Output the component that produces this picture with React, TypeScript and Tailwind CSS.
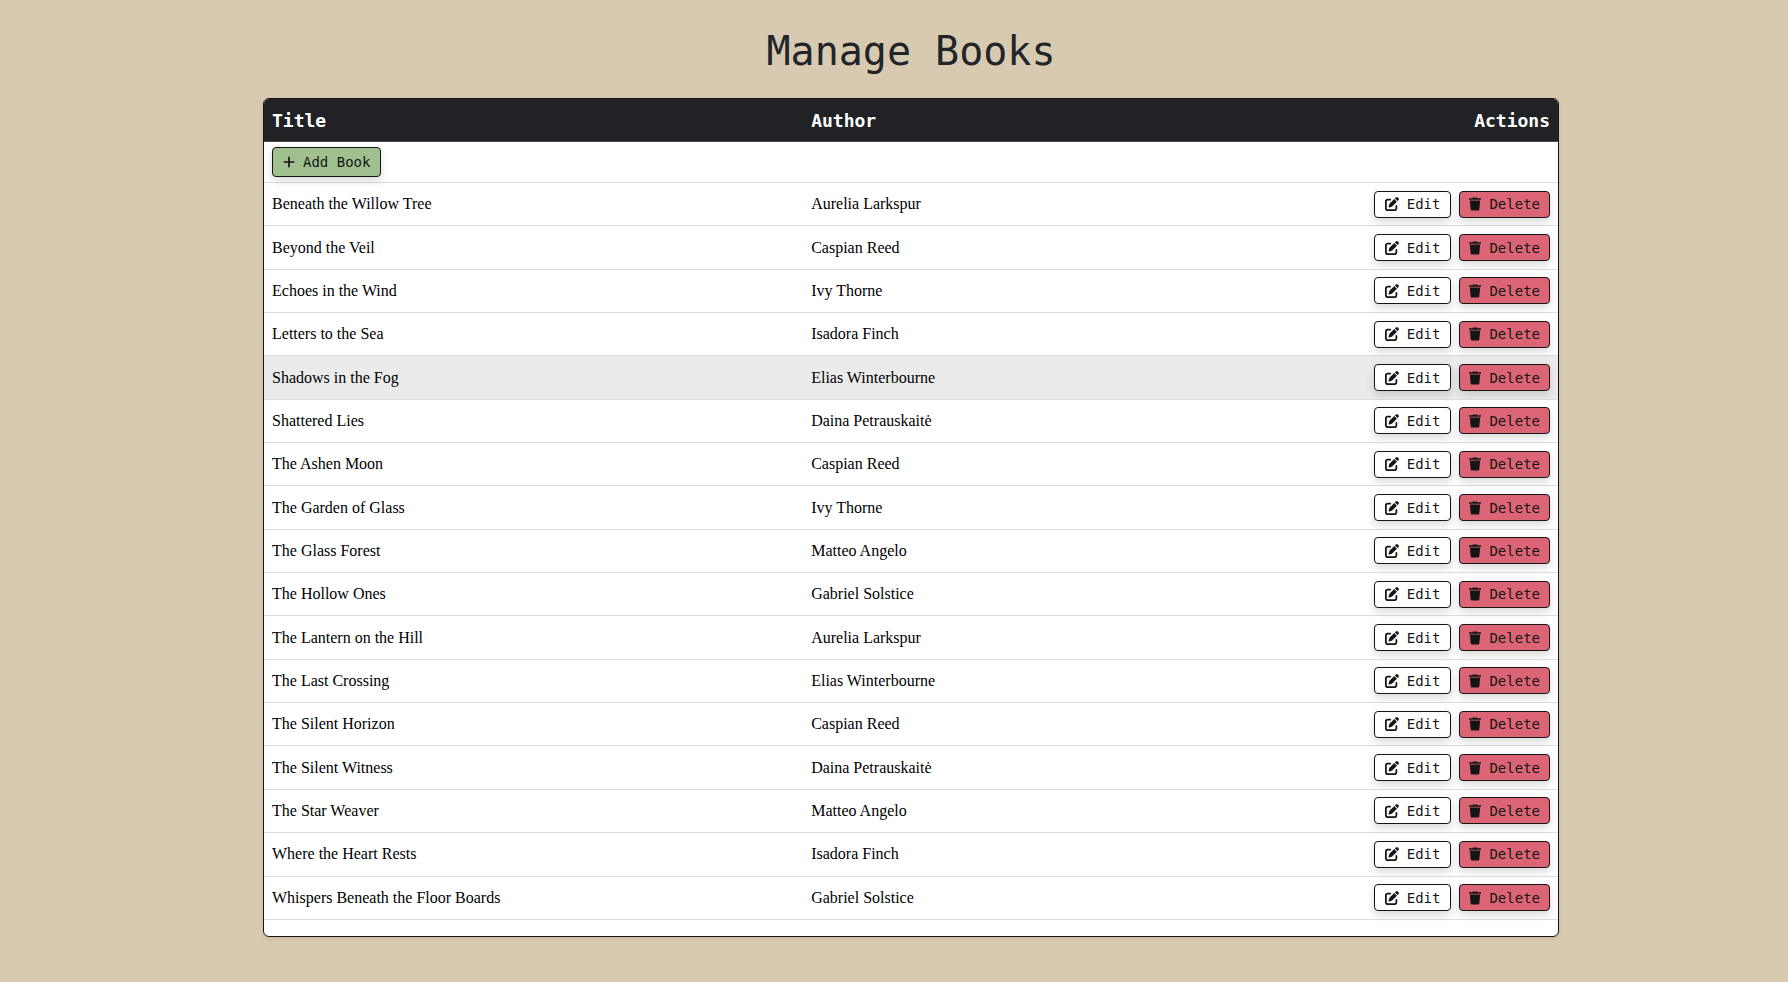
import type { ButtonHTMLAttributes } from "react";
import { FaPenToSquare, FaPlus } from "react-icons/fa6";

type Book = { title: string; author: string };

const books: Book[] = [
  { title: "Beneath the Willow Tree", author: "Aurelia Larkspur" },
  { title: "Beyond the Veil", author: "Caspian Reed" },
  { title: "Echoes in the Wind", author: "Ivy Thorne" },
  { title: "Letters to the Sea", author: "Isadora Finch" },
  { title: "Shadows in the Fog", author: "Elias Winterbourne" },
  { title: "Shattered Lies", author: "Daina Petrauskaitė" },
  { title: "The Ashen Moon", author: "Caspian Reed" },
  { title: "The Garden of Glass", author: "Ivy Thorne" },
  { title: "The Glass Forest", author: "Matteo Angelo" },
  { title: "The Hollow Ones", author: "Gabriel Solstice" },
  { title: "The Lantern on the Hill", author: "Aurelia Larkspur" },
  { title: "The Last Crossing", author: "Elias Winterbourne" },
  { title: "The Silent Horizon", author: "Caspian Reed" },
  { title: "The Silent Witness", author: "Daina Petrauskaitė" },
  { title: "The Star Weaver", author: "Matteo Angelo" },
  { title: "Where the Heart Rests", author: "Isadora Finch" },
  { title: "Whispers Beneath the Floor Boards", author: "Gabriel Solstice" },
];

const highlighted = "Shadows in the Fog";

const tones = {
  add: "h-[30px] px-[10px] bg-[#a0c090]",
  edit: "h-[27px] px-[10px] bg-white",
  remove: "h-[27px] px-[9px] bg-[#dc6575]",
};

function TrashIcon() {
  return (
    <svg className="h-[14px] w-3" viewBox="0 0 12 14" fill="currentColor" aria-hidden>
      <path d="M4 .4h4l.5.8H12v1.5H0V1.2h3.5z" />
      <path d="M.8 3.4h10.4l-.9 9.2q-.1.9-1 .9H2.7q-.9 0-1-.9z" />
    </svg>
  );
}

function ActionButton({
  tone,
  children,
  ...rest
}: { tone: keyof typeof tones } & ButtonHTMLAttributes<HTMLButtonElement>) {
  return (
    <button
      type="button"
      className={`inline-flex cursor-pointer items-center gap-2 rounded border border-[#151515] align-middle font-['DejaVu_Sans_Mono',monospace] text-[14px] leading-5 text-[#151515] shadow-[0_4px_8px_rgba(0,0,0,0.15)] ${tones[tone]}`}
      {...rest}
    >
      {children}
    </button>
  );
}

function BookRow({ book }: { book: Book }) {
  const background = book.title === highlighted ? "bg-[#ebebeb]" : "bg-white";
  return (
    <tr className={`hover:bg-[#ebebeb] ${background}`}>
      <td className="px-2">{book.title}</td>
      <td className="px-2">{book.author}</td>
      <td className="px-2">
        <div className="flex justify-end gap-2">
          <ActionButton tone="edit" aria-label={`Edit ${book.title}`}>
            <FaPenToSquare aria-hidden />
            Edit
          </ActionButton>
          <ActionButton tone="remove" aria-label={`Delete ${book.title}`}>
            <TrashIcon />
            Delete
          </ActionButton>
        </div>
      </td>
    </tr>
  );
}

export default function App() {
  return (
    <div className="min-h-screen bg-[#d8cab0] pt-[26px] pb-11 pl-[34px]">
      <main className="mx-auto max-w-[1296px]">
        <h1 className="mb-[22px] text-center font-['DejaVu_Sans_Mono',monospace] text-[40px] leading-[50px] text-[#212529]">
          Manage Books
        </h1>
        <div className="overflow-hidden rounded-md border border-[#151515] bg-white pb-4 shadow-[0_2px_4px_rgba(0,0,0,0.08)]">
          <table className="h-[821px] w-full table-fixed border-separate border-spacing-0 font-['Liberation_Serif',serif] text-[16px] leading-6 text-black [&_td]:border-b [&_td]:border-[#dcdddf]">
            <colgroup>
              <col className="w-5/12" />
              <col className="w-1/3" />
              <col className="w-1/4" />
            </colgroup>
            <thead>
              <tr className="h-[43px] bg-[#212226] font-['DejaVu_Sans_Mono',monospace] text-[18px] text-white [&_th]:border-b [&_th]:border-[#48494c] [&_th]:px-2 [&_th]:pt-[2px]">
                <th scope="col" className="text-left">Title</th>
                <th scope="col" className="text-left">Author</th>
                <th scope="col" className="text-right">Actions</th>
              </tr>
            </thead>
            <tbody>
              <tr className="h-[41px]">
                <td colSpan={3} className="px-2">
                  <ActionButton tone="add">
                    <FaPlus className="w-3" aria-hidden />
                    Add Book
                  </ActionButton>
                </td>
              </tr>
              {books.map((book) => (
                <BookRow key={book.title} book={book} />
              ))}
            </tbody>
          </table>
        </div>
      </main>
    </div>
  );
}
